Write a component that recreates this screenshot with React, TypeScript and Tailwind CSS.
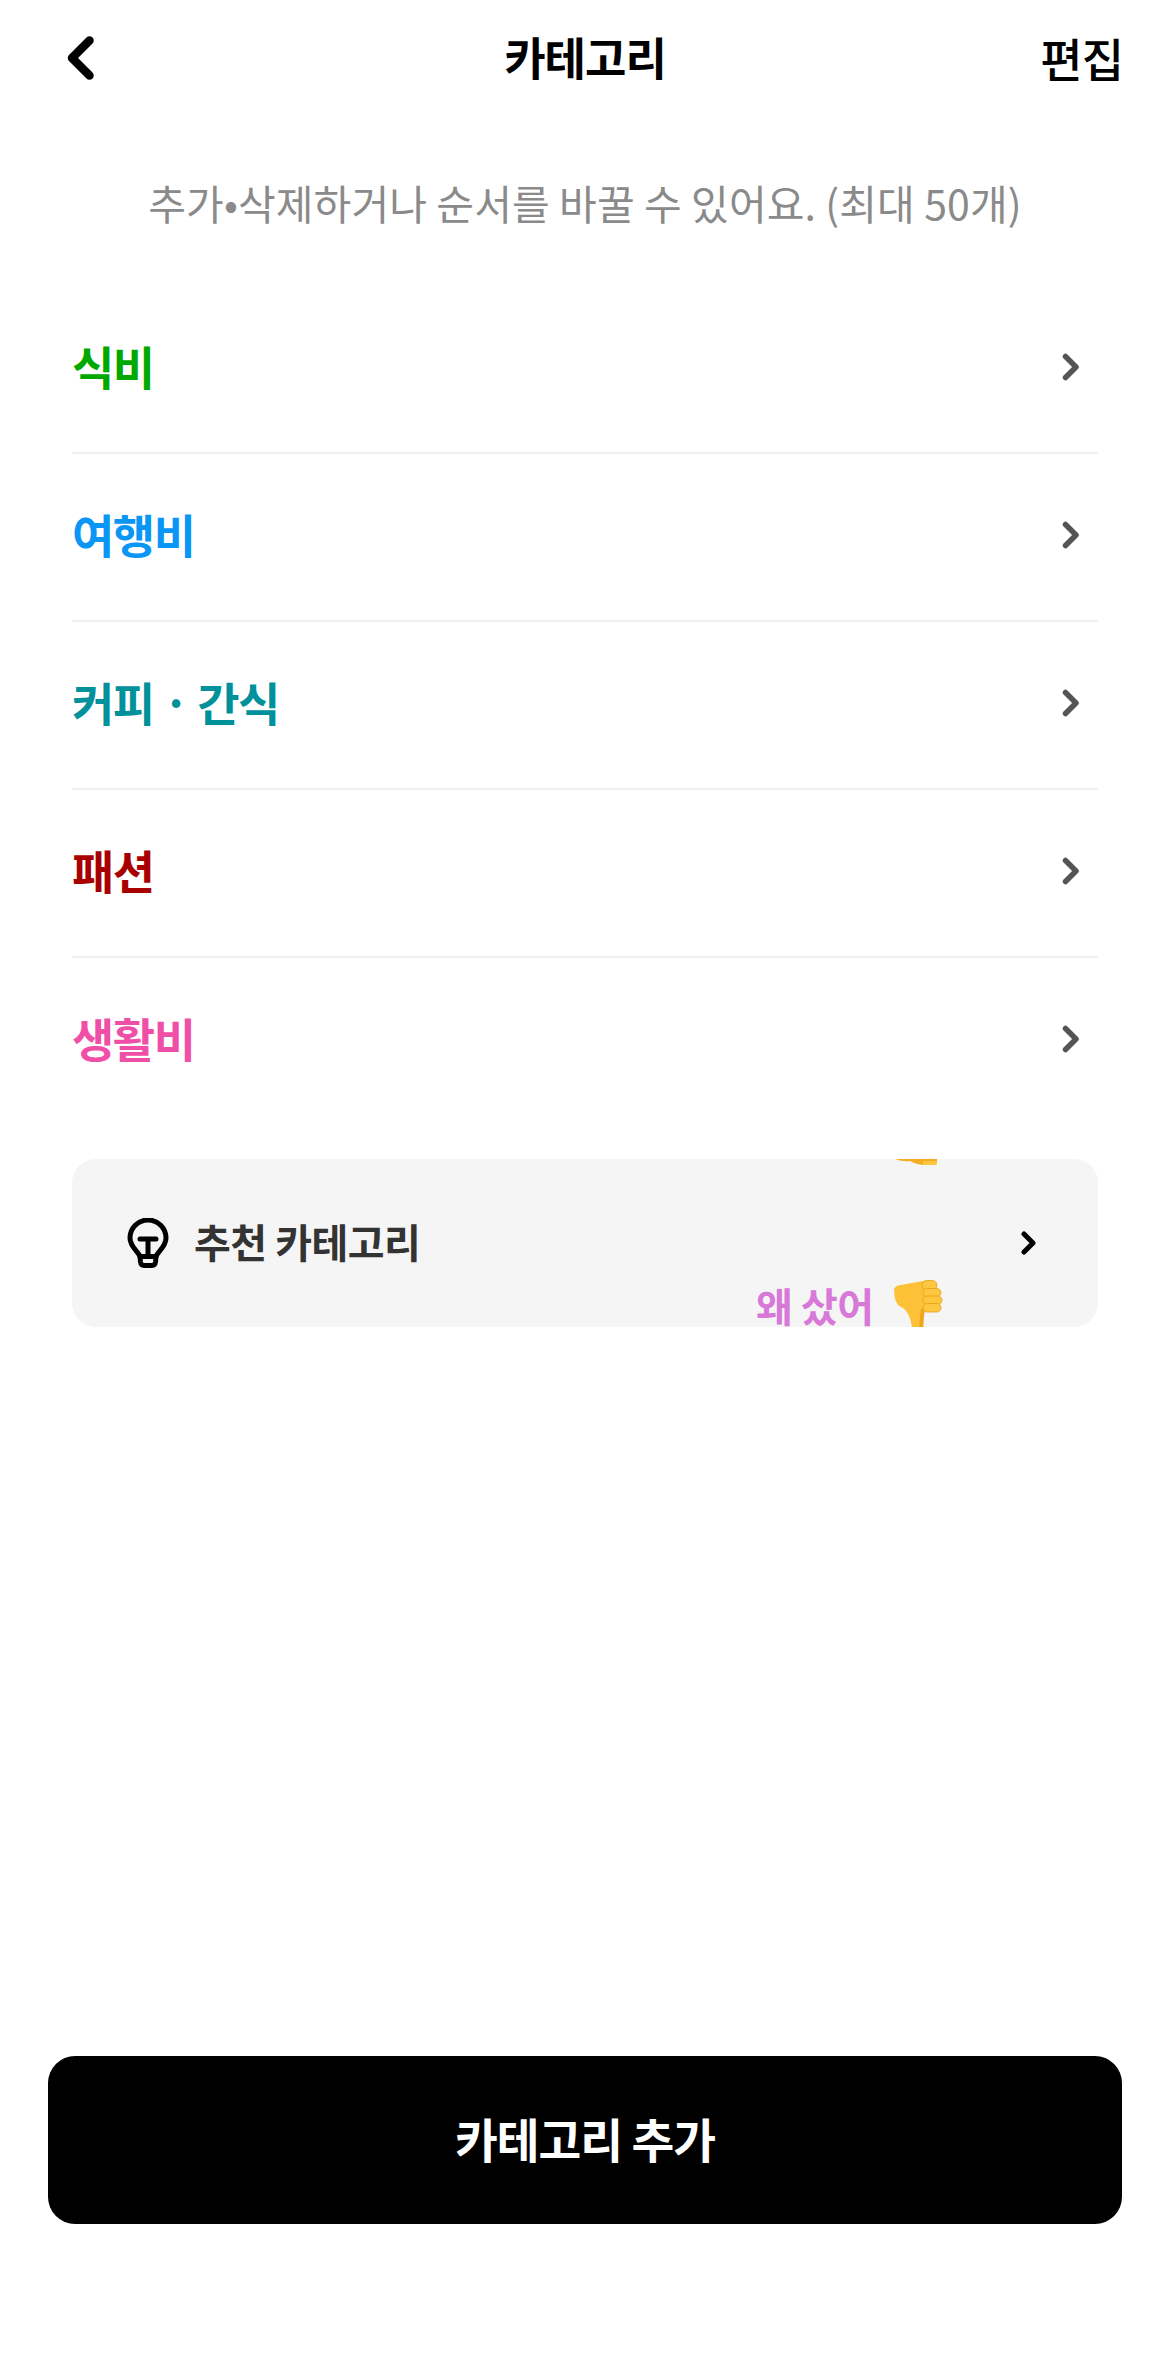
const rows = [
  { name: "식비", color: "text-[#00a800]" },
  { name: "여행비", color: "text-[#0a96f5]" },
  { name: "커피 · 간식", color: "text-[#00919b]" },
  { name: "패션", color: "text-[#a80000]" },
  { name: "생활비", color: "text-[#f04fa8]" },
];

function BackIcon() {
  return (
    <svg width="27" height="44" viewBox="0 0 27 44" fill="none">
      <path d="M22.5 4.5 5 22l17.5 17.5" stroke="#000" strokeWidth="8.5" strokeLinecap="round" strokeLinejoin="round" />
    </svg>
  );
}

function RowChevron() {
  return (
    <svg className="mt-[2px]" width="18" height="28" viewBox="0 0 18 28" fill="none">
      <path d="M3.5 3.5 14 14 3.5 24.5" stroke="#555" strokeWidth="5.5" strokeLinecap="round" strokeLinejoin="round" />
    </svg>
  );
}

function Bulb() {
  return (
    <svg width="42" height="50" viewBox="0 0 42 50" fill="none" stroke="#000" strokeWidth="5" strokeLinecap="round" strokeLinejoin="round">
      <path d="M13 38.500C11 33 3 29 3 20A18 18 0 0 1 39 20C39 29 31 33 29 38.500L28.500 44Q28 47.500 25 47.500H17Q14 47.500 13.500 44Z" />
      <path d="M13 21H29M21 21V38M13 38.500H29" />
    </svg>
  );
}

function ThumbDown() {
  return (
    <svg className="-mt-[4px]" width="50" height="60" viewBox="0 0 50 60">
      <path d="M1 9Q3 5 8 5L19 3L30 1H36V30H32Q30 38 30 60H20Q19 42 16 36Q13 29 8 27Q1 24 1 9Z" fill="#fcc136" />
      <path d="M30 60Q30 38 32 29H28Q26 42 26 60Z" fill="#f0a41f" />
      <rect x="29" y="0.500" width="15" height="9.500" rx="4.700" fill="#fdc83f" stroke="#e89d18" strokeWidth="0.800" />
      <rect x="30" y="8.500" width="18" height="8.500" rx="4.200" fill="#fdc83f" stroke="#e89d18" strokeWidth="0.800" />
      <rect x="30" y="16" width="19" height="8.500" rx="4.200" fill="#fdc83f" stroke="#e89d18" strokeWidth="0.800" />
      <rect x="30" y="23.500" width="18" height="8.500" rx="4.200" fill="#fdc83f" stroke="#e89d18" strokeWidth="0.800" />
    </svg>
  );
}

function ThumbFragment() {
  return (
    <svg width="44" height="8" viewBox="0 0 44 8">
      <path d="M0 0H42V3.500Q42 6 39 6H30Q22 6 15 2Q8 3 0 0Z" fill="#f3ae25" />
      <path d="M28 6H39Q42 6 42 3.500V2H28Z" fill="#fdc83f" />
    </svg>
  );
}

export default function App() {
  return (
    <div className="flex h-[2374px] w-[1170px] flex-col bg-white font-['Noto_Sans_CJK_KR','Noto_Sans',sans-serif]">
      <header className="relative flex h-[116px] shrink-0 items-center justify-between pl-[67px] pr-[47px]">
        <BackIcon />
        <h1 className="absolute left-0 right-0 top-[31px] text-center text-[45px] font-bold leading-[52px] tracking-[-1px] text-black">
          카테고리
        </h1>
        <button className="-mt-[2px] text-[46px] font-medium leading-[52px] tracking-[-1px] text-black">편집</button>
      </header>

      <p className="mt-[57px] text-center text-[41px] leading-[58px] tracking-[0.1px] text-[#8a8a8a]">
        추가•삭제하거나 순서를 바꿀 수 있어요. (최대 50개)
      </p>

      <ul className="mx-[72px] mt-[55px]">
        {rows.map((row, i) => (
          <li
            key={row.name}
            className={`flex h-[168px] items-center justify-between border-b-2 pb-[6px] pr-[18px] ${i < rows.length - 1 ? "border-[#f0f0f0]" : "border-transparent"}`}
          >
            <span className={`-mt-[2px] text-[46px] font-bold tracking-[-1.5px] ${row.color}`}>{row.name}</span>
            <RowChevron />
          </li>
        ))}
      </ul>

      <div className="relative mx-[72px] mt-[33px] flex h-[168px] shrink-0 items-center justify-between overflow-hidden rounded-[24px] bg-[#f5f5f5] pl-[55px] pr-[62px]">
        <div className="flex items-center gap-[25px]">
          <Bulb />
          <span className="-mt-[5px] text-[40px] font-bold tracking-[-0.5px] text-[#333]">추천 카테고리</span>
        </div>
        <svg width="15" height="24" viewBox="0 0 15 24" fill="none">
          <path d="M3 3 12 12 3 21" stroke="#000" strokeWidth="5" strokeLinecap="round" strokeLinejoin="round" />
        </svg>
        <div className="absolute left-[823px] top-0">
          <ThumbFragment />
        </div>
        <div className="absolute left-[684px] top-[125px] flex items-start gap-[20px]">
          <span className="text-[40px] font-bold leading-[42px] tracking-[-0.5px] text-[#d878d8]">왜 샀어</span>
          <ThumbDown />
        </div>
      </div>

      <div className="mt-auto px-[48px] pb-[150px]">
        <button className="flex h-[168px] w-full items-center justify-center rounded-[27px] bg-black pb-[5px] text-[46.5px] font-bold tracking-[-1px] text-white">
          카테고리 추가
        </button>
      </div>
    </div>
  );
}
